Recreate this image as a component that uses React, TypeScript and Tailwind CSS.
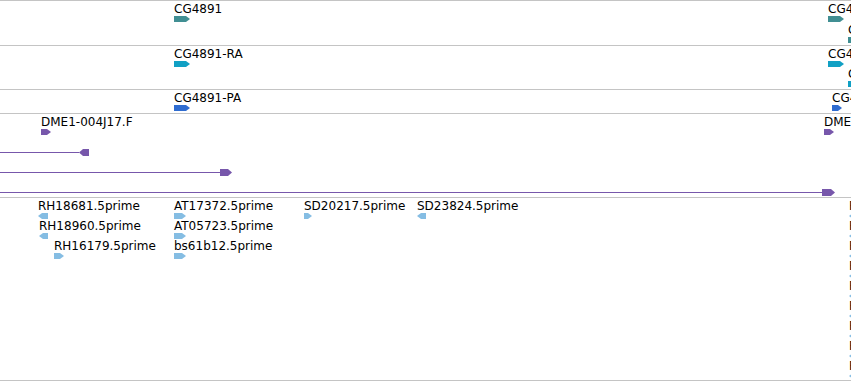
import React from 'react';

type Dir = 'r' | 'l';

// a feature on the track canvas: label above a glyph, placed at its coordinate
type Feat = { x: number; y: number; label: string; w: number; dir: Dir };

// long read pair: line from the left edge ending in a glyph
type Line = { y: number; end: number; headW: number; dir: Dir };

const TEAL = '#418f93';
const CYAN = '#11a0c4';
const BLUE = '#2f6cd0';
const PURPLE = '#7757ab';
const LIGHT = '#85bde3';

const Arrow = ({ w, dir, color, h = 6 }: { w: number; dir: Dir; color: string; h?: number }) => {
  const t = Math.min(4, w / 2);
  const pts =
    dir === 'r'
      ? `0,0 ${w - t},0 ${w},${h / 2} ${w - t},${h} 0,${h}`
      : `${t},0 ${w},0 ${w},${h} ${t},${h} 0,${h / 2}`;
  return (
    <svg width={w} height={h} className="block shrink-0">
      <polygon points={pts} fill={color} />
    </svg>
  );
};

const Feature = ({ f, color }: { f: Feat; color: string }) => (
  <div className="absolute flex flex-col items-start" style={{ left: f.x, top: f.y }}>
    <span className="whitespace-nowrap text-black">{f.label}</span>
    <Arrow w={f.w} dir={f.dir} color={color} />
  </div>
);

const LineFeature = ({ l }: { l: Line }) => (
  <div className="absolute left-0 flex items-center" style={{ top: l.y - 3, width: l.end }}>
    <div className="h-px flex-1 bg-[#7757ab]" />
    <Arrow w={l.headW} dir={l.dir} color={PURPLE} h={7} />
  </div>
);

const Track = ({ h, children }: { h: string; children: React.ReactNode }) => (
  <div className={`relative w-full shrink-0 overflow-hidden border-b border-[#c4c4c4] ${h}`}>{children}</div>
);

const geneFeats: Feat[] = [
  { x: 174, y: 1, label: 'CG4891', w: 16, dir: 'r' },
  { x: 828, y: 1, label: 'CG4891', w: 16, dir: 'r' },
  { x: 848, y: 22, label: 'CG4891', w: 6, dir: 'r' },
];

const rnaFeats: Feat[] = [
  { x: 174, y: 1, label: 'CG4891-RA', w: 16, dir: 'r' },
  { x: 828, y: 1, label: 'CG4891-RA', w: 16, dir: 'r' },
  { x: 848, y: 21, label: 'CG4891-RB', w: 6, dir: 'r' },
];

const protFeats: Feat[] = [
  { x: 174, y: 1, label: 'CG4891-PA', w: 16, dir: 'r' },
  { x: 832, y: 1, label: 'CG4891-PA', w: 10, dir: 'r' },
];

const cloneFeats: Feat[] = [
  { x: 41, y: 1, label: 'DME1-004J17.F', w: 10, dir: 'r' },
  { x: 824, y: 1, label: 'DME1-004J17.R', w: 10, dir: 'r' },
];

const cloneLines: Line[] = [
  { y: 38, end: 89, headW: 10, dir: 'l' },
  { y: 58, end: 232, headW: 12, dir: 'r' },
  { y: 78, end: 835, headW: 13, dir: 'r' },
];

const estFeats: Feat[] = [
  { x: 38, y: 1, label: 'RH18681.5prime', w: 10, dir: 'l' },
  { x: 39, y: 21, label: 'RH18960.5prime', w: 9, dir: 'l' },
  { x: 54, y: 41, label: 'RH16179.5prime', w: 10, dir: 'r' },
  { x: 174, y: 1, label: 'AT17372.5prime', w: 12, dir: 'r' },
  { x: 174, y: 21, label: 'AT05723.5prime', w: 12, dir: 'r' },
  { x: 174, y: 41, label: 'bs61b12.5prime', w: 12, dir: 'r' },
  { x: 304, y: 1, label: 'SD20217.5prime', w: 8, dir: 'r' },
  { x: 417, y: 1, label: 'SD23824.5prime', w: 9, dir: 'l' },
  // stack running off the right edge of the view
  ...Array.from({ length: 9 }, (_, i) => ({
    x: 849,
    y: 1 + i * 20,
    label: 'RH' + (20114 + i * 37) + '.5prime',
    w: 8,
    dir: 'l' as Dir,
  })),
];

const App: React.FC = () => {
  return (
    <div className="flex h-[381px] w-[851px] flex-col overflow-hidden border-t border-[#c4c4c4] bg-white font-['DejaVu_Sans',sans-serif] text-[12px] leading-[14px]">
      <Track h="h-[45px]">
        {geneFeats.map((f, i) => <Feature key={i} f={f} color={TEAL} />)}
      </Track>
      <Track h="h-[44px]">
        {rnaFeats.map((f, i) => <Feature key={i} f={f} color={CYAN} />)}
      </Track>
      <Track h="h-[24px]">
        {protFeats.map((f, i) => <Feature key={i} f={f} color={BLUE} />)}
      </Track>
      <Track h="h-[84px]">
        {cloneFeats.map((f, i) => <Feature key={i} f={f} color={PURPLE} />)}
        {cloneLines.map((l, i) => <LineFeature key={i} l={l} />)}
      </Track>
      <Track h="h-[183px]">
        {estFeats.map((f, i) => <Feature key={i} f={f} color={LIGHT} />)}
      </Track>
    </div>
  );
};

export default App;
